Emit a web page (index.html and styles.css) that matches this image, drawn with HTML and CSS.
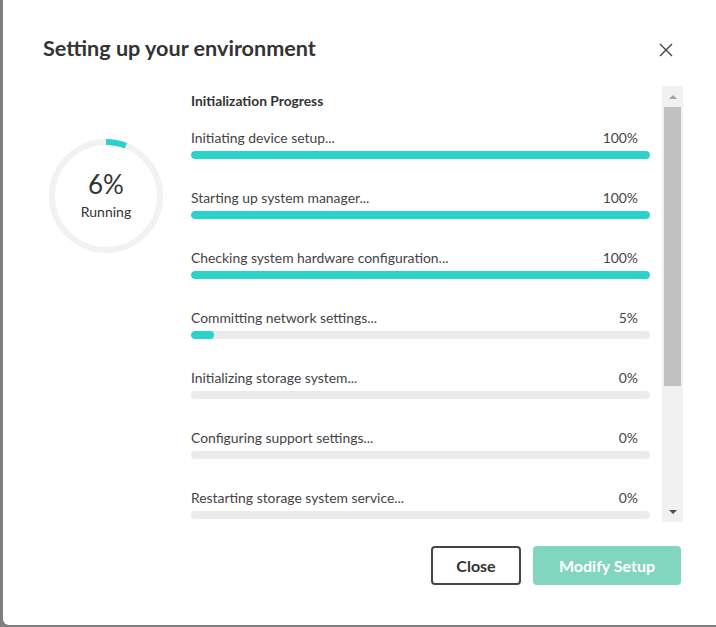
FILE: index.html
```html
<!DOCTYPE html>
<html>
<head>
<meta charset="utf-8">
<link rel="stylesheet" href="styles.css">
</head>
<body>
<div class="dialog">
  <div class="header">
    <h1 class="title">Setting up your environment</h1>
    <button class="close-x" aria-label="Close">
      <svg width="14" height="14" viewBox="0 0 14 14"><path d="M1 1 L13 13 M13 1 L1 13" stroke="#444" stroke-width="1.4" fill="none"/></svg>
    </button>
  </div>
  <div class="body">
    <div class="status">
      <div class="ring">
        <svg width="116" height="116" viewBox="0 0 116 116">
          <circle cx="58" cy="58" r="54" fill="none" stroke="#f2f2f2" stroke-width="6"/>
          <circle cx="58" cy="58" r="54" fill="none" stroke="#2ad2c9" stroke-width="6" stroke-dasharray="20.4 400" transform="rotate(-90 58 58)"/>
        </svg>
        <div class="ring-text">
          <div class="pct">6%</div>
          <div class="state">Running</div>
        </div>
      </div>
    </div>
    <div class="list-wrap">
      <div class="list">
        <div class="list-title">Initialization Progress</div>
        <div class="item">
          <div class="row"><span>Initiating device setup...</span><span class="val">100%</span></div>
          <div class="bar"><div class="fill" style="width:100%"></div></div>
        </div>
        <div class="item">
          <div class="row"><span>Starting up system manager...</span><span class="val">100%</span></div>
          <div class="bar"><div class="fill" style="width:100%"></div></div>
        </div>
        <div class="item">
          <div class="row"><span>Checking system hardware configuration...</span><span class="val">100%</span></div>
          <div class="bar"><div class="fill" style="width:100%"></div></div>
        </div>
        <div class="item">
          <div class="row"><span>Committing network settings...</span><span class="val">5%</span></div>
          <div class="bar"><div class="fill" style="width:5%"></div></div>
        </div>
        <div class="item">
          <div class="row"><span>Initializing storage system...</span><span class="val">0%</span></div>
          <div class="bar"></div>
        </div>
        <div class="item">
          <div class="row"><span>Configuring support settings...</span><span class="val">0%</span></div>
          <div class="bar"></div>
        </div>
        <div class="item">
          <div class="row"><span>Restarting storage system service...</span><span class="val">0%</span></div>
          <div class="bar"></div>
        </div>
      </div>
      <div class="scrollbar">
        <div class="arrow up"></div>
        <div class="thumb"></div>
        <div class="track-rest"></div>
        <div class="arrow down"></div>
      </div>
    </div>
  </div>
  <div class="footer">
    <button class="btn btn-outline">Close</button>
    <button class="btn btn-primary">Modify Setup</button>
  </div>
</div>
</body>
</html>
```
FILE: styles.css
```css
html, body {
  margin: 0;
  padding: 0;
  height: 100%;
  overflow: hidden;
}
body {
  background: #7f7f7f;
  font-family: "Lato", "Liberation Sans", sans-serif;
  color: #333;
}
.dialog {
  margin-left: 3px;
  width: 713px;
  height: 625px;
  background: #fff;
  border-bottom-left-radius: 6px;
  box-sizing: border-box;
  padding: 0 33px 0 40px;
  display: flex;
  flex-direction: column;
}
.header {
  display: flex;
  justify-content: space-between;
  align-items: center;
  height: 86px;
  padding-top: 12px;
  box-sizing: border-box;
}
.title {
  margin: 0;
  font-size: 21.6px;
  line-height: 26px;
  font-weight: 700;
  color: #333;
  margin-top: -2px;
}
.close-x {
  border: 0;
  background: none;
  padding: 0;
  margin-right: 10px;
  margin-top: 2px;
  width: 14px;
  height: 14px;
  display: flex;
}
.body {
  display: flex;
  height: 436px;
}
.status {
  width: 148px;
  flex: none;
}
.ring {
  position: relative;
  width: 116px;
  height: 116px;
  margin: 52px 0 0 5px;
}
.ring svg {
  display: block;
}
.ring-text {
  position: absolute;
  inset: 0;
  display: flex;
  flex-direction: column;
  align-items: center;
  justify-content: center;
}
.pct {
  font-size: 26px;
  line-height: 30px;
  color: #333;
  margin-top: -2px;
}
.state {
  font-size: 14px;
  line-height: 18px;
  color: #333;
  margin-top: 4px;
}
.list-wrap {
  flex: 1;
  display: flex;
  gap: 12px;
}
.list {
  flex: 1;
  overflow: hidden;
  padding-top: 7px;
}
.list-title {
  font-size: 13.8px;
  font-weight: 700;
  line-height: 16px;
  margin-bottom: 21px;
  color: #333;
}
.item {
  margin-bottom: 31px;
}
.row {
  display: flex;
  justify-content: space-between;
  font-size: 13.9px;
  line-height: 16px;
  color: #444;
  padding-right: 12px;
}
.bar {
  margin-top: 5px;
  height: 8px;
  border-radius: 4px;
  background: #ebebeb;
  overflow: hidden;
}
.fill {
  height: 100%;
  background: #2ad2c9;
  border-radius: 4px;
}
.scrollbar {
  width: 21px;
  flex: none;
  background: #f1f1f1;
  display: flex;
  flex-direction: column;
  align-items: center;
}
.arrow {
  height: 21px;
  width: 17px;
  display: flex;
  align-items: center;
  justify-content: center;
}
.arrow::before {
  content: "";
  width: 0;
  height: 0;
  border-left: 4px solid transparent;
  border-right: 4px solid transparent;
}
.arrow.up::before {
  border-bottom: 4px solid #a3a3a3;
}
.arrow.down::before {
  border-top: 4px solid #505050;
}
.thumb {
  width: 17px;
  height: 279px;
  background: #c1c1c1;
}
.track-rest {
  flex: 1;
}
.footer {
  display: flex;
  justify-content: flex-end;
  gap: 12px;
  margin-top: 24px;
  padding-right: 2px;
}
.btn {
  height: 39px;
  padding: 0;
  border-radius: 4px;
  font-family: inherit;
  font-size: 16px;
  line-height: 20px;
  font-weight: 700;
  cursor: pointer;
  box-sizing: border-box;
}
.btn-outline {
  width: 90px;
  background: #fff;
  border: 2px solid #444;
  color: #333;
}
.btn-primary {
  width: 148px;
  background: #82d6c0;
  border: 0;
  color: #fff;
}
```
